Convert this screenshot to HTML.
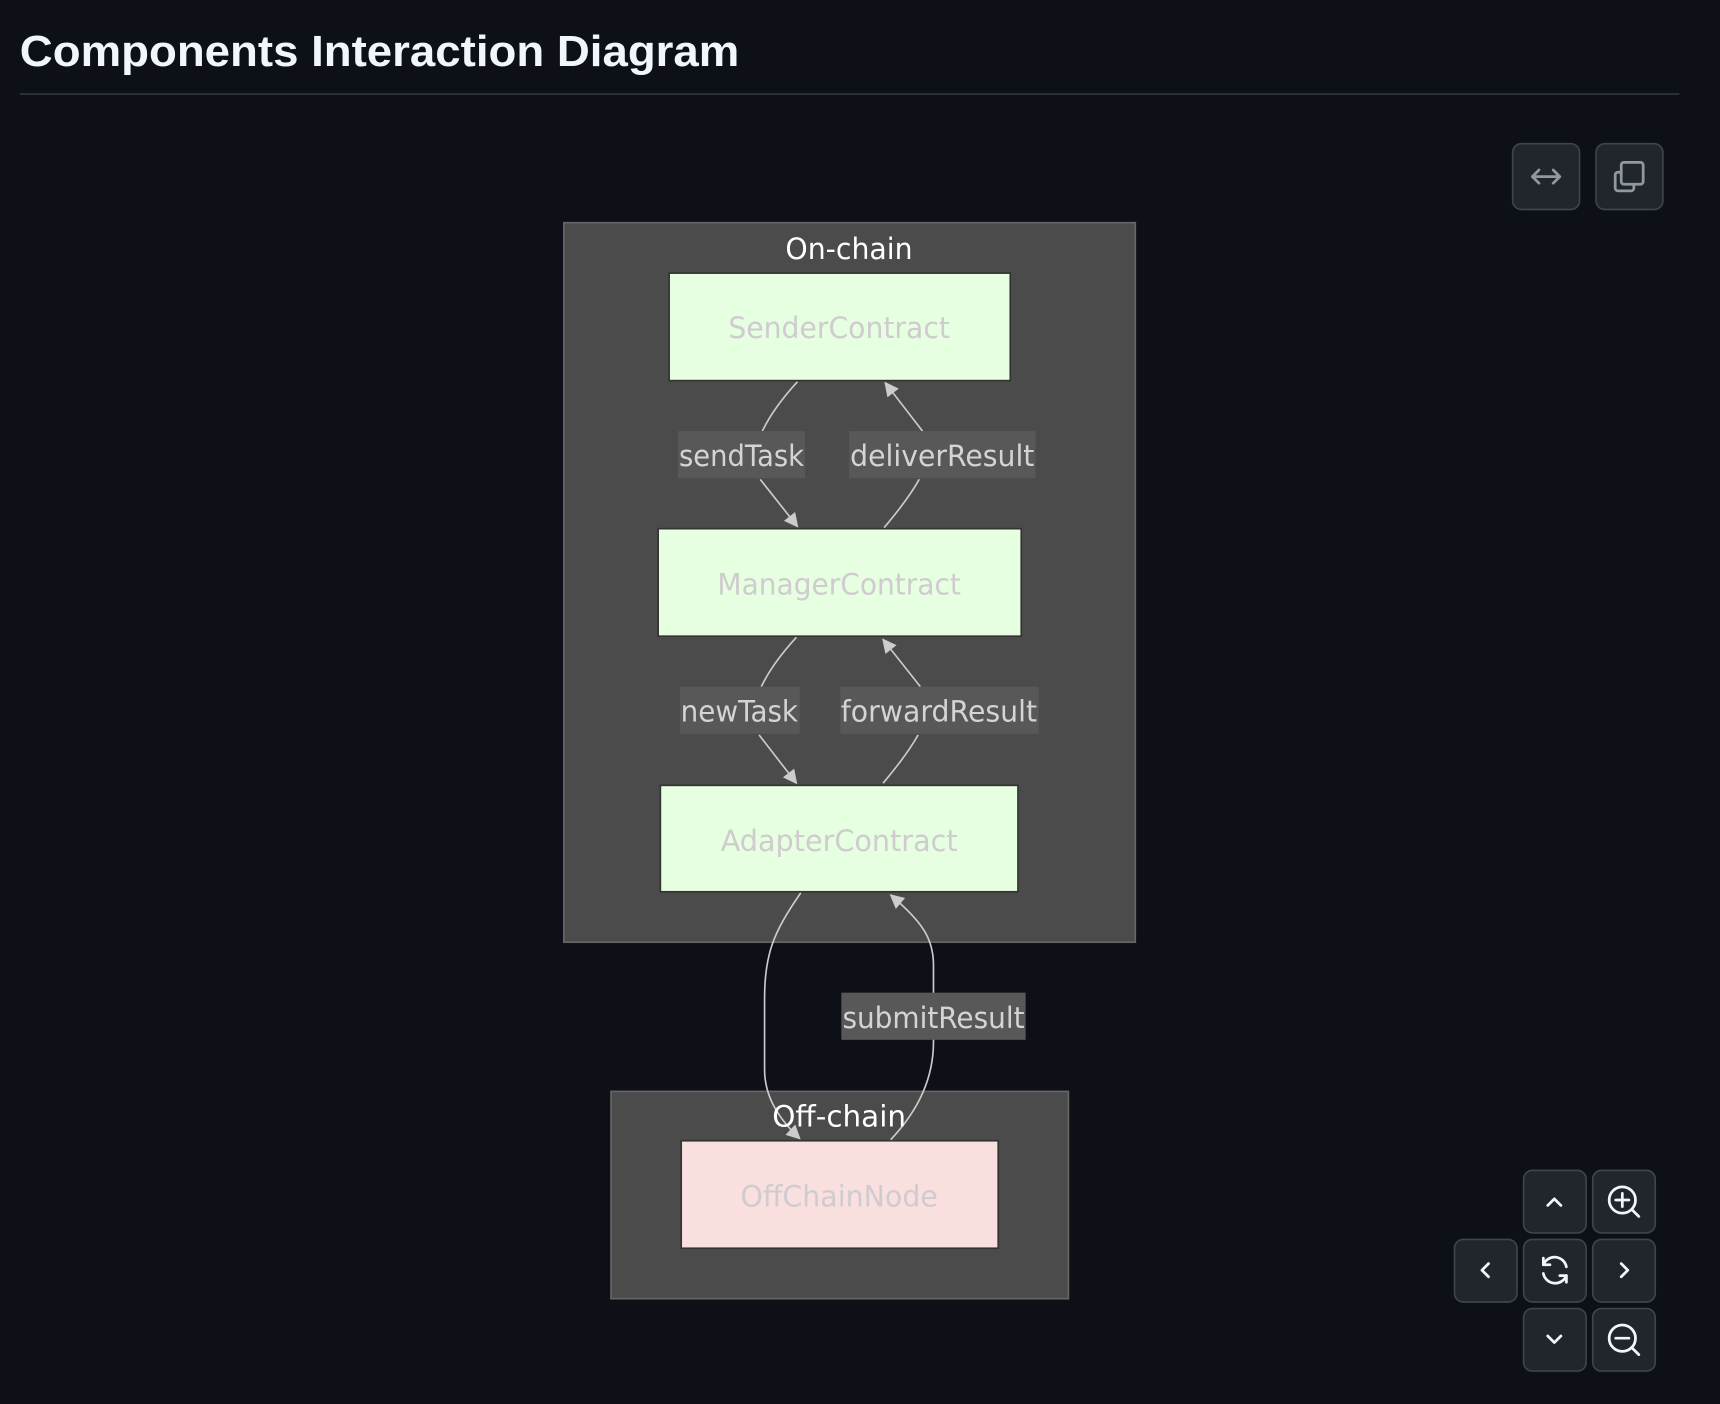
<!DOCTYPE html>
<html><head><meta charset="utf-8"><style>
html,body{margin:0;padding:0;background:#0d1117;}
svg{display:block}
</style></head><body>
<svg width="1720" height="1404" viewBox="0 0 1568 1280" xmlns="http://www.w3.org/2000/svg">
<defs>
<marker id="ah" viewBox="0 0 10 10" refX="9" refY="5" markerWidth="15" markerHeight="13" markerUnits="userSpaceOnUse" orient="auto">
<path d="M0,0 L10,5 L0,10 z" fill="#cccccc"/></marker>
</defs>
<rect width="1568" height="1280" fill="#0d1117"/>
<text x="18" y="60" font-family="Liberation Sans, sans-serif" font-weight="bold" font-size="40" fill="#f0f6fc" textLength="656" lengthAdjust="spacingAndGlyphs">Components Interaction Diagram</text>
<rect x="18" y="85" width="1513" height="1.5" fill="#30363d"/>

<g fill="#21262d" stroke="#3d444d" stroke-width="1.5">
<rect x="1379" y="131" width="61" height="60" rx="8"/>
<rect x="1455" y="131" width="61" height="60" rx="8"/>
</g>
<g fill="none" stroke="#9198a1" stroke-width="2.5" stroke-linecap="round" stroke-linejoin="round">
<path d="M1397,161 H1422 M1403,155 L1397,161 L1403,167 M1416,155 L1422,161 L1416,167"/>
<rect x="1478" y="148" width="20" height="20" rx="2.5"/>
<path d="M1478,157 h-3 a2.5,2.5 0 0 0 -2.5,2.5 v12 a2.5,2.5 0 0 0 2.5,2.5 h12 a2.5,2.5 0 0 0 2.5,-2.5 v-3"/>
</g>

<rect x="514" y="203" width="521" height="656" fill="#4a4b4a" stroke="#666" stroke-width="1.5"/>
<rect x="557" y="995" width="417" height="189" fill="#4a4b4a" stroke="#666" stroke-width="1.5"/>
<text x="774" y="236" text-anchor="middle" font-family="DejaVu Sans, sans-serif" font-size="27" fill="#fff" textLength="116" lengthAdjust="spacingAndGlyphs">On-chain</text>

<g stroke="#333" stroke-width="1.5">
<rect x="610" y="249" width="311" height="98" fill="#e5ffe0"/>
<rect x="600" y="482" width="331" height="98" fill="#e5ffe0"/>
<rect x="602" y="716" width="326" height="97" fill="#e5ffe0"/>
<rect x="621" y="1040" width="289" height="98" fill="#fadfdf"/>
</g>
<g font-family="DejaVu Sans, sans-serif" font-size="27" fill="#cfcbcf" text-anchor="middle">
<text x="765" y="308" textLength="202" lengthAdjust="spacingAndGlyphs">SenderContract</text>
<text x="765" y="542" textLength="222" lengthAdjust="spacingAndGlyphs">ManagerContract</text>
<text x="765" y="776" textLength="216" lengthAdjust="spacingAndGlyphs">AdapterContract</text>
<text x="765" y="1100" textLength="180" lengthAdjust="spacingAndGlyphs">OffChainNode</text>
</g>

<g fill="none" stroke="#cccccc" stroke-width="1.5">
<path d="M727,348 Q705,372 695,393"/>
<path d="M693,437 L727,480" marker-end="url(#ah)"/>
<path d="M806,481 Q828,455 838,437"/>
<path d="M841,393 L807,349" marker-end="url(#ah)"/>
<path d="M726,581 Q704,605 694,626"/>
<path d="M692,670 L726,714" marker-end="url(#ah)"/>
<path d="M805,714 Q827,688 837,670"/>
<path d="M839,626 L805,583" marker-end="url(#ah)"/>
<path d="M730,814 C705,850 697,870 697,910 L697,975 C697,1000 710,1020 729,1038" marker-end="url(#ah)"/>
<path d="M812,1039 C830,1020 851,990 851,950 L851,880 C851,855 840,840 812,816" marker-end="url(#ah)"/>
</g>

<g fill="#585858">
<rect x="618" y="393" width="116" height="43"/>
<rect x="774" y="393" width="170" height="43"/>
<rect x="620" y="626" width="109" height="43"/>
<rect x="766" y="626" width="181" height="43"/>
<rect x="767" y="905" width="168" height="43"/>
</g>
<g font-family="DejaVu Sans, sans-serif" font-size="27" fill="#d4d4d4" text-anchor="middle">
<text x="676" y="425" textLength="114" lengthAdjust="spacingAndGlyphs">sendTask</text>
<text x="859" y="425" textLength="168" lengthAdjust="spacingAndGlyphs">deliverResult</text>
<text x="674" y="658" textLength="107" lengthAdjust="spacingAndGlyphs">newTask</text>
<text x="856" y="658" textLength="179" lengthAdjust="spacingAndGlyphs">forwardResult</text>
<text x="851" y="937" textLength="166" lengthAdjust="spacingAndGlyphs">submitResult</text>
</g>
<text x="765" y="1027" text-anchor="middle" font-family="DejaVu Sans, sans-serif" font-size="27" fill="#fff" textLength="122" lengthAdjust="spacingAndGlyphs">Off-chain</text>

<g fill="#21262d" stroke="#3d444d" stroke-width="1.5">
<rect x="1389" y="1067" width="57" height="57" rx="8"/>
<rect x="1452" y="1067" width="57" height="57" rx="8"/>
<rect x="1326" y="1130" width="57" height="57" rx="8"/>
<rect x="1389" y="1130" width="57" height="57" rx="8"/>
<rect x="1452" y="1130" width="57" height="57" rx="8"/>
<rect x="1389" y="1193" width="57" height="57" rx="8"/>
<rect x="1452" y="1193" width="57" height="57" rx="8"/>
</g>
<g fill="none" stroke="#f0f6fc" stroke-width="2.5" stroke-linecap="round" stroke-linejoin="round">
<path d="M1411,1099 L1417,1093 L1423,1099"/>
<path d="M1411,1218 L1417,1224 L1423,1218"/>
<path d="M1357,1152 L1351,1158 L1357,1164"/>
<path d="M1478,1152 L1484,1158 L1478,1164"/>
<circle cx="1479" cy="1094" r="12"/><path d="M1488,1103 L1494,1109 M1473,1094 H1485 M1479,1088 V1100"/>
<circle cx="1479" cy="1220" r="12"/><path d="M1488,1229 L1494,1235 M1473,1220 H1485"/>
<path d="M1407,1153 A11,11 0 0 1 1428,1155 M1428,1163 A11,11 0 0 1 1407,1161"/>
<path d="M1407,1147 V1153 H1413 M1428,1169 V1163 H1422"/>
</g>
</svg>
</body></html>
